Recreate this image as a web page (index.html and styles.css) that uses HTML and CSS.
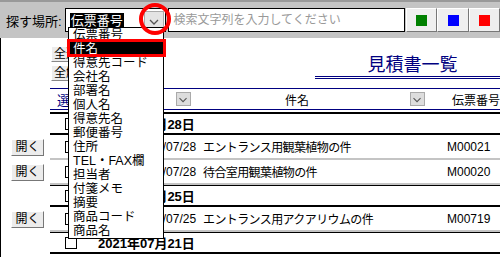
FILE: index.html
```html
<!DOCTYPE html>
<html lang="ja">
<head>
    <meta charset="UTF-8">
    <meta name="viewport" content="width=device-width, initial-scale=1.0">
    <title>見積書一覧</title>
    <link rel="stylesheet" href="styles.css">
</head>
<body>

    <div class="toolbar">
        <span class="label">探す場所:</span>
        <div class="select">
            <span class="select-value">伝票番号</span>
            <span class="select-arrow">
                <svg width="18" height="17" viewBox="0 0 18 17"><polyline points="5,8 9,12 13,8" fill="none" stroke="#555" stroke-width="1.3"/></svg>
            </span>
        </div>
        <div class="search">検索文字列を入力してください</div>
        <button class="color-btn"><span class="swatch green"></span></button>
        <button class="color-btn"><span class="swatch blue"></span></button>
        <button class="color-btn"><span class="swatch red"></span></button>
    </div>

    <div class="main">
        <div class="top">
            <div class="bulk">
                <button class="small-btn">全選択</button>
                <button class="small-btn">全解除</button>
            </div>
            <h1 class="heading">見積書一覧</h1>
        </div>

        <div class="head-row">
            <span class="h-select">選択</span>
            <span class="sort"><svg width="16" height="14" viewBox="0 0 16 14"><polyline points="4,6 8,10 12,6" fill="none" stroke="#555" stroke-width="1.2"/></svg></span>
            <span class="h-title">件名</span>
            <span class="sort"><svg width="16" height="14" viewBox="0 0 16 14"><polyline points="4,6 8,10 12,6" fill="none" stroke="#555" stroke-width="1.2"/></svg></span>
            <span class="h-code">伝票番号</span>
        </div>
        <div class="rule"></div>

        <div class="row group first">
            <div class="lead"></div>
            <div class="cells">
                <span class="cb-cell"><span class="cb"></span></span>
                <span class="g-date">2021年07月28日</span>
            </div>
        </div>
        <div class="row item">
            <div class="lead"><button class="open-btn">開く</button></div>
            <div class="cells">
                <span class="cb-cell"><span class="cb"></span></span>
                <span class="date">2021/07/28</span>
                <span class="title">エントランス用観葉植物の件</span>
                <span class="code">M00021</span>
            </div>
        </div>
        <div class="row item">
            <div class="lead"><button class="open-btn">開く</button></div>
            <div class="cells">
                <span class="cb-cell"><span class="cb"></span></span>
                <span class="date">2021/07/28</span>
                <span class="title">待合室用観葉植物の件</span>
                <span class="code">M00020</span>
            </div>
        </div>
        <div class="row group">
            <div class="lead"></div>
            <div class="cells">
                <span class="cb-cell"><span class="cb"></span></span>
                <span class="g-date">2021年07月25日</span>
            </div>
        </div>
        <div class="row item">
            <div class="lead"><button class="open-btn">開く</button></div>
            <div class="cells">
                <span class="cb-cell"><span class="cb"></span></span>
                <span class="date">2021/07/25</span>
                <span class="title">エントランス用アクアリウムの件</span>
                <span class="code">M00719</span>
            </div>
        </div>
        <div class="row group">
            <div class="lead"></div>
            <div class="cells">
                <span class="cb-cell"><span class="cb"></span></span>
                <span class="g-date">2021年07月21日</span>
            </div>
        </div>
    </div>

    <!-- open dropdown of the select -->
    <ul class="options">
        <li>伝票番号</li>
        <li class="picked">件名</li>
        <li>得意先コード</li>
        <li>会社名</li>
        <li>部署名</li>
        <li>個人名</li>
        <li>得意先名</li>
        <li>郵便番号</li>
        <li>住所</li>
        <li>TEL・FAX欄</li>
        <li>担当者</li>
        <li>付箋メモ</li>
        <li>摘要</li>
        <li>商品コード</li>
        <li>商品名</li>
    </ul>

    <!-- red annotation marks -->
    <svg class="mark-circle" width="36" height="36" viewBox="0 0 36 36"><circle cx="18" cy="18" r="14" fill="none" stroke="#f00" stroke-width="4"/></svg>
    <div class="mark-rect"></div>

</body>
</html>
```

FILE: styles.css
```css
body {
    margin: 0;
    width: 500px;
    height: 257px;
    overflow: hidden;
    position: relative;
    font-family: "Liberation Sans", "Noto Sans CJK JP", sans-serif;
    font-size: 12px;
    color: #000;
    background-color: #fff;
}

button {
    font-family: inherit;
    margin: 0;
}

.toolbar {
    height: 36px;
    border-top: 2px solid #999;
    background-color: #c4c4c4;
    display: flex;
    align-items: center;
    padding-left: 6px;
}

.label {
    font-size: 13px;
    width: 60px;
}

.select {
    height: 22px;
    border: 1px solid #000;
    background-color: #fff;
    display: flex;
    align-items: center;
    justify-content: space-between;
    padding-left: 4px;
    padding-right: 1px;
    box-sizing: content-box;
    margin-right: 2px;
    width: 97px;
}

.select-value {
    background-color: #000;
    color: #fff;
    font-size: 13px;
    line-height: 15px;
    padding: 0 1px;
}

.select-arrow {
    width: 18px;
    height: 17px;
    background-color: #e4e4e4;
    border: 1px solid #aaa;
    display: flex;
}

.search {
    width: 236px;
    height: 22px;
    border: 1px solid #000;
    background-color: #fff;
    color: #999;
    line-height: 22px;
    padding-left: 4px;
    margin-right: 1px;
}

.color-btn {
    width: 32px;
    height: 24px;
    padding: 0;
    background-color: #efefef;
    border: 1px solid;
    border-color: #fff #777 #777 #fff;
    display: flex;
    align-items: center;
    justify-content: center;
}

.swatch {
    width: 11px;
    height: 11px;
}

.green { background-color: #008000; }
.blue { background-color: #00f; }
.red { background-color: #f00; }

.main {
    height: 219px;
    border-left: 1px solid #000;
    overflow: hidden;
}

.top {
    height: 50px;
    margin-left: 49px;
    border-bottom: 1px solid #000080;
    display: flex;
}

.bulk {
    display: flex;
    flex-direction: column;
    gap: 3px;
    padding: 8px 0 0 1px;
}

.small-btn {
    height: 16px;
    font-size: 12px;
    line-height: 14px;
    padding: 0 2px;
    background-color: #ececec;
    border: 1px solid;
    border-color: #fff #888 #888 #fff;
    text-align: left;
}

.heading {
    margin: 16px 0 0 auto;
    width: 175px;
    font-size: 18px;
    font-weight: normal;
    line-height: 22px;
    text-align: center;
    color: #000080;
    border-bottom: 3px double #000080;
    height: 22px;
    padding-left: 10px;
    box-sizing: content-box;
}

.head-row {
    height: 20px;
    margin-left: 49px;
    border-bottom: 1px solid #000080;
    display: flex;
    align-items: center;
}

.h-select {
    width: 127px;
    padding-left: 7px;
    box-sizing: border-box;
    color: #000080;
    font-size: 13px;
}

.sort {
    width: 14px;
    height: 12px;
    margin-left: 7px;
    background-color: #ddd;
    border: 1px solid #aaa;
    display: flex;
    overflow: hidden;
}

.sort svg {
    margin: -1px 0 0 -1px;
}

.h-title {
    width: 227px;
    text-align: center;
}

.h-code {
    margin-left: 27px;
    white-space: nowrap;
}

.rule {
    height: 2px;
    margin: 2px 0 0 49px;
    background-color: #000;
}

.row {
    display: flex;
}

.lead {
    width: 49px;
    display: flex;
    align-items: center;
}

.cells {
    flex: 1;
    display: grid;
    align-items: center;
}

.group .cells {
    height: 19px;
    grid-template-columns: 48px 1fr;
    border-bottom: 2px solid #000;
    border-top: 1px solid #000;
}

.group.first .cells {
    border-top: none;
}

.item .cells {
    height: 23px;
    grid-template-columns: 86px 67px 244px 1fr;
    border-bottom: 2px solid #c4c4c4;
}

.cb-cell {
    padding-left: 15px;
    display: flex;
}

.cb {
    width: 10px;
    height: 10px;
    border: 1px solid #000;
    background-color: #fff;
}

.g-date {
    font-weight: bold;
    font-size: 13px;
    white-space: nowrap;
}

.title {
    letter-spacing: -0.6px;
    white-space: nowrap;
}

.open-btn {
    margin-left: 10px;
    width: 33px;
    height: 17px;
    padding: 0;
    font-size: 12px;
    line-height: 15px;
    background-color: #ececec;
    border: 1px solid;
    border-color: #fff #777 #777 #fff;
}

.options {
    position: absolute;
    left: 68px;
    top: 27px;
    width: 94px;
    margin: 0;
    padding: 0;
    list-style: none;
    border: 1px solid #000;
    background-color: #fff;
    font-size: 12.5px;
}

.options li {
    height: 14px;
    line-height: 14px;
    padding-left: 4px;
    white-space: nowrap;
    overflow: hidden;
}

.options .picked {
    background-color: #000;
    color: #fff;
}

.mark-circle {
    position: absolute;
    left: 137px;
    top: 1px;
}

.mark-rect {
    position: absolute;
    left: 67px;
    top: 39px;
    width: 93px;
    height: 12px;
    border: 3px solid #f00;
}
```
